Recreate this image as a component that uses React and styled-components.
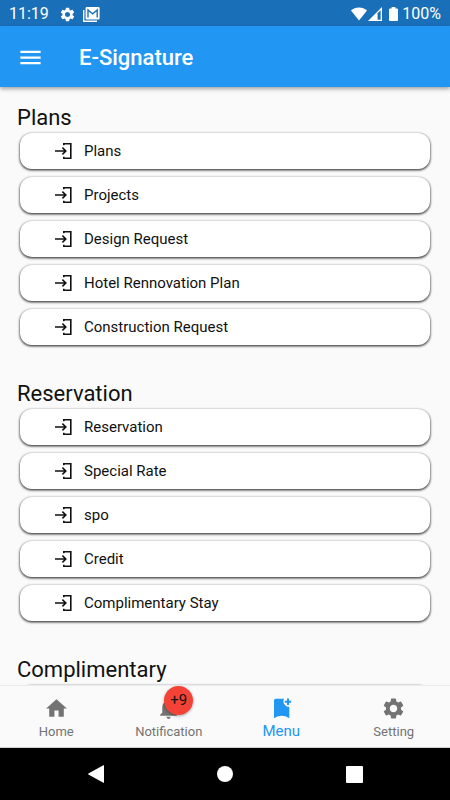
import React from 'react';
import styled, { createGlobalStyle } from 'styled-components';
import { MdHome, MdMenu, MdNotifications, MdSettings } from 'react-icons/md';

const sections = [
  {
    title: 'Plans',
    items: ['Plans', 'Projects', 'Design Request', 'Hotel Rennovation Plan', 'Construction Request'],
  },
  {
    title: 'Reservation',
    items: ['Reservation', 'Special Rate', 'spo', 'Credit', 'Complimentary Stay'],
  },
  {
    title: 'Complimentary',
    items: [''],
  },
];

const EnterIcon = () => (
  <svg width="17" height="18" viewBox="0 0 17 18" fill="none" stroke="#111" strokeWidth="1.6">
    <path d="M8.8 3.2V1.8H15.8V16.2H8.8V14.8" />
    <path d="M0 9H10.8M7.4 5.6L10.8 9L7.4 12.4" />
  </svg>
);

const MailStackIcon = () => (
  <svg width="17" height="15" viewBox="0 0 17 15">
    <path d="M0.7 3V14.2H14" fill="none" stroke="#fff" strokeWidth="1.4" />
    <rect x="2.6" y="0" width="14" height="12.4" rx="1.2" fill="#fff" />
    <path d="M5 10.6V3L9.6 6.8L14.2 3V10.6" fill="none" stroke="#1a70b8" strokeWidth="1.4" />
  </svg>
);

const WifiIcon = () => (
  <svg width="16" height="14" viewBox="0 0 16 14" fill="#fff">
    <path d="M8 13.6L0 3.6C2.2 1.6 5 0.4 8 0.4S13.8 1.6 16 3.6Z" />
  </svg>
);

const SignalIcon = () => (
  <svg width="14" height="14" viewBox="0 0 14 14">
    <path d="M0 14L14 0V14Z" fill="#fff" />
    <path d="M9.6 6.2L12.6 3.2V12.8H9.6Z" fill="#1a70b8" />
  </svg>
);

const BatteryIcon = () => (
  <svg width="9" height="14" viewBox="0 0 9 14" fill="#fff">
    <path d="M2.6 0H6.4V1.4H8Q9 1.4 9 2.4V13Q9 14 8 14H1Q0 14 0 13V2.4Q0 1.4 1 1.4H2.6Z" />
  </svg>
);

const BookmarkPlusIcon = () => (
  <svg width="25" height="25" viewBox="0 0 25 25" fill="currentColor">
    <path d="M5 4.5Q5 2.7 6.8 2.7H15A5.6 5.6 0 0 0 20.3 10.8V22.2Q12.6 17.4 5 22.2Z" />
    <path d="M18 2.5H20V4.7H22.2V6.7H20V8.9H18V6.7H15.8V4.7H18Z" />
  </svg>
);

function App() {
  return (
    <Page>
      <GlobalStyle />
      <StatusBar>
        <StatusText>11:19</StatusText>
        <StatusIcons>
          <MdSettings size={17} />
          <MailStackIcon />
        </StatusIcons>
        <StatusRight>
          <WifiIcon />
          <SignalIcon />
          <Battery>
            <BatteryIcon />
            <StatusText>100%</StatusText>
          </Battery>
        </StatusRight>
      </StatusBar>

      <AppBar>
        <MenuButton type="button" aria-label="Open menu">
          <MdMenu size={27} />
        </MenuButton>
        <AppTitle>E-Signature</AppTitle>
      </AppBar>

      <Content>
        {sections.map((section) => (
          <Section key={section.title}>
            <SectionTitle>{section.title}</SectionTitle>
            <CardList>
              {section.items.map((item) => (
                <Card type="button" key={item} aria-label={item || section.title}>
                  <EnterIcon />
                  {item}
                </Card>
              ))}
            </CardList>
          </Section>
        ))}
      </Content>

      <BottomNav>
        <NavItem href="#home">
          <MdHome size={25} />
          <NavLabel>Home</NavLabel>
        </NavItem>
        <NavItem href="#notification">
          <BadgeAnchor>
            <MdNotifications size={25} />
            <Badge>+9</Badge>
          </BadgeAnchor>
          <NavLabel>Notification</NavLabel>
        </NavItem>
        <NavItem href="#menu" $active aria-current="page">
          <BookmarkPlusIcon />
          <NavLabel $active>Menu</NavLabel>
        </NavItem>
        <NavItem href="#setting">
          <MdSettings size={25} />
          <NavLabel>Setting</NavLabel>
        </NavItem>
      </BottomNav>

      <SystemBar>
        <SystemButton type="button" aria-label="Back">
          <svg width="16" height="18" viewBox="0 0 16 18" fill="#fff">
            <path d="M16 0.6V17.4Q16 18 15.4 17.7L0.4 9.4Q0 9 0.4 8.6L15.4 0.3Q16 0 16 0.6Z" />
          </svg>
        </SystemButton>
        <SystemButton type="button" aria-label="Home">
          <svg width="16" height="16" viewBox="0 0 16 16" fill="#fff">
            <circle cx="8" cy="8" r="8" />
          </svg>
        </SystemButton>
        <SystemButton type="button" aria-label="Recent apps">
          <svg width="17" height="17" viewBox="0 0 17 17" fill="#fff">
            <rect width="17" height="17" rx="1" />
          </svg>
        </SystemButton>
      </SystemBar>
    </Page>
  );
}

const GlobalStyle = createGlobalStyle`
  * {
    box-sizing: border-box;
  }

  body {
    margin: 0;
    background: #fafafa;
    font-family: Roboto, sans-serif;
  }

  button {
    border: 0;
    font-family: inherit;
    cursor: pointer;
  }

  svg {
    display: block;
    flex-shrink: 0;
  }
`;

const Page = styled.div`
  display: flex;
  flex-direction: column;
  height: 100vh;
  color: #111;
`;

const StatusBar = styled.div`
  display: flex;
  align-items: center;
  height: 26px;
  padding: 2px 9px 0;
  background: #1a70b8;
  color: #fff;
`;

const StatusText = styled.span`
  font-size: 16px;
  line-height: 24px;
`;

const StatusIcons = styled.div`
  display: flex;
  align-items: center;
  gap: 7px;
  margin-left: 10px;
`;

const StatusRight = styled.div`
  display: flex;
  align-items: center;
  gap: 1px;
  margin-left: auto;
`;

const Battery = styled.div`
  display: flex;
  align-items: center;
  gap: 4px;
  margin-left: 6px;
`;

const AppBar = styled.header`
  display: flex;
  align-items: center;
  gap: 35px;
  height: 61px;
  padding: 2px 17px 0;
  background: #2196f3;
  color: #fff;
  box-shadow: 0 2px 4px rgba(0, 0, 0, 0.35);
  z-index: 1;
`;

const MenuButton = styled.button`
  padding: 0;
  background: none;
  color: inherit;
`;

const AppTitle = styled.h1`
  margin: 0;
  font-size: 22px;
  font-weight: 500;
`;

const Content = styled.main`
  flex: 1;
  min-height: 0;
  overflow: hidden;
  padding: 17px 17px 0;
`;

const Section = styled.section`
  margin-bottom: 35px;
`;

const SectionTitle = styled.h2`
  margin: 0;
  font-size: 22px;
  font-weight: 400;
  line-height: 28px;
`;

const CardList = styled.div`
  display: flex;
  flex-direction: column;
  gap: 8px;
  padding: 1px 3px 0;
`;

const Card = styled.button`
  display: flex;
  align-items: center;
  gap: 12px;
  height: 36px;
  padding: 0 35px;
  border-radius: 12px;
  background: #fff;
  color: #111;
  font-size: 15px;
  text-align: left;
  box-shadow: 0 1px 2px 1px rgba(0, 0, 0, 0.45), 0 1px 1px rgba(0, 0, 0, 0.3);
`;

const BottomNav = styled.nav`
  display: flex;
  height: 63px;
  border-top: 1px solid #ececec;
  border-bottom: 1px solid #d0d0d0;
  background: #fafafa;
  z-index: 1;
`;

const NavItem = styled.a`
  display: flex;
  flex: 1;
  flex-direction: column;
  align-items: center;
  padding-top: 10px;
  color: ${({ $active }) => ($active ? '#2196f3' : '#737373')};
  text-decoration: none;
`;

const NavLabel = styled.span`
  font-size: ${({ $active }) => ($active ? '15px' : '13px')};
  line-height: ${({ $active }) => ($active ? '20px' : '22px')};
`;

const BadgeAnchor = styled.div`
  position: relative;
`;

const Badge = styled.span`
  position: absolute;
  top: -10px;
  left: 8px;
  width: 29px;
  height: 29px;
  border-radius: 50%;
  background: #f44336;
  color: #111;
  font-size: 15px;
  line-height: 29px;
  text-align: center;
  box-shadow: 0 1px 3px rgba(0, 0, 0, 0.35);
`;

const SystemBar = styled.footer`
  display: flex;
  align-items: center;
  justify-content: center;
  gap: 89px;
  height: 52px;
  background: #000;
`;

const SystemButton = styled.button`
  display: flex;
  justify-content: center;
  width: 40px;
  padding: 8px 0;
  background: none;
`;

export default App;
